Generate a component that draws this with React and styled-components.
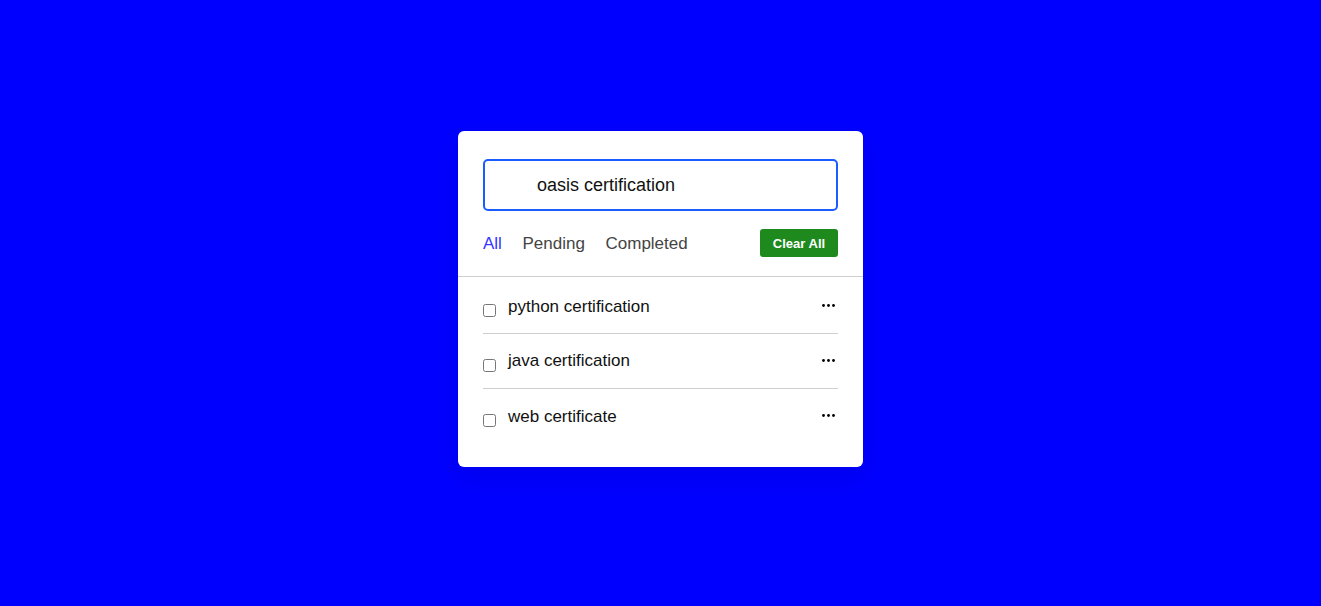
import React, { useState, useRef, useEffect } from 'react'
import styled, { createGlobalStyle } from 'styled-components'

const GlobalStyle = createGlobalStyle`
  * { box-sizing: border-box; }
  html, body { margin: 0; padding: 0; }
  body {
    background: #0000ff;
    font-family: "Liberation Sans", Arial, sans-serif;
  }
`

const Page = styled.div`
  min-height: 100vh;
  display: flex;
  justify-content: center;
  align-items: center;
  padding-top: 1px;
  padding-bottom: 9px;
`

const Card = styled.div`
  width: 405px;
  background: #fff;
  border-radius: 6px;
  padding: 28px 0 23px;
  box-shadow: 0 10px 30px rgba(0, 0, 0, 0.08);
`

const Top = styled.div`
  padding: 0 25px;
`

const TaskInput = styled.input`
  display: block;
  width: 100%;
  height: 52px;
  border: 2px solid #1a5cff;
  border-radius: 5px;
  padding: 0 20px 0 52px;
  font-family: inherit;
  font-size: 18px;
  color: #111;
  caret-color: #000;
  outline: none;
`

const Controls = styled.div`
  display: flex;
  align-items: center;
  justify-content: space-between;
  margin: 18px 0 19px;
`

const Filters = styled.div`
  display: flex;
  gap: 20.6px;
  padding-top: 2px;
`

const Filter = styled.span`
  font-size: 17px;
  color: ${p => (p.$active ? '#3535ff' : '#444')};
  cursor: pointer;
`

const ClearButton = styled.button`
  width: 78px;
  height: 28px;
  border: none;
  border-radius: 3px;
  background: #1e8a1e;
  color: #fff;
  font-family: inherit;
  font-weight: bold;
  font-size: 13px;
  cursor: pointer;
`

const Divider = styled.div`
  height: 1px;
  background: #cfcfcf;
`

const List = styled.ul`
  list-style: none;
  margin: 0;
  padding: 2px 25px 0;
`

const Row = styled.li`
  display: flex;
  align-items: center;
  height: 55px;
  padding-top: ${p => (p.$first ? '1px' : '0')};
  border-bottom: ${p => (p.$last ? 'none' : '1px solid #cfcfcf')};
`

const Label = styled.label`
  display: flex;
  align-items: center;
  flex: 1;
  font-size: 17px;
  color: #111;
`

const Check = styled.input`
  width: 13px;
  height: 13px;
  margin: 8px 12px 0 0;
`

const Menu = styled.span`
  display: flex;
  margin-right: 3px;
  margin-top: -2px;
  cursor: pointer;
`

const Dots = () => (
  <svg width="13" height="3" viewBox="0 0 13 3">
    <circle cx="1.5" cy="1.5" r="1.4" fill="#000" />
    <circle cx="6.5" cy="1.5" r="1.4" fill="#000" />
    <circle cx="11.5" cy="1.5" r="1.4" fill="#000" />
  </svg>
)

const tasks = ['python certification', 'java certification', 'web certificate']

export default function App() {
  const [value, setValue] = useState('oasis certification')
  const [filter, setFilter] = useState('All')
  const inputRef = useRef()

  useEffect(() => {
    const el = inputRef.current
    el.focus()
    el.setSelectionRange(el.value.length, el.value.length)
  }, [])

  return (
    <Page>
      <GlobalStyle />
      <Card>
        <Top>
          <TaskInput ref={inputRef} value={value} onChange={e => setValue(e.target.value)} />
          <Controls>
            <Filters>
              {['All', 'Pending', 'Completed'].map(f => (
                <Filter key={f} $active={filter === f} onClick={() => setFilter(f)}>
                  {f}
                </Filter>
              ))}
            </Filters>
            <ClearButton>Clear All</ClearButton>
          </Controls>
        </Top>
        <Divider />
        <List>
          {tasks.map((t, i) => (
            <Row key={t} $first={i === 0} $last={i === tasks.length - 1}>
              <Label>
                <Check type="checkbox" />
                {t}
              </Label>
              <Menu>
                <Dots />
              </Menu>
            </Row>
          ))}
        </List>
      </Card>
    </Page>
  )
}
